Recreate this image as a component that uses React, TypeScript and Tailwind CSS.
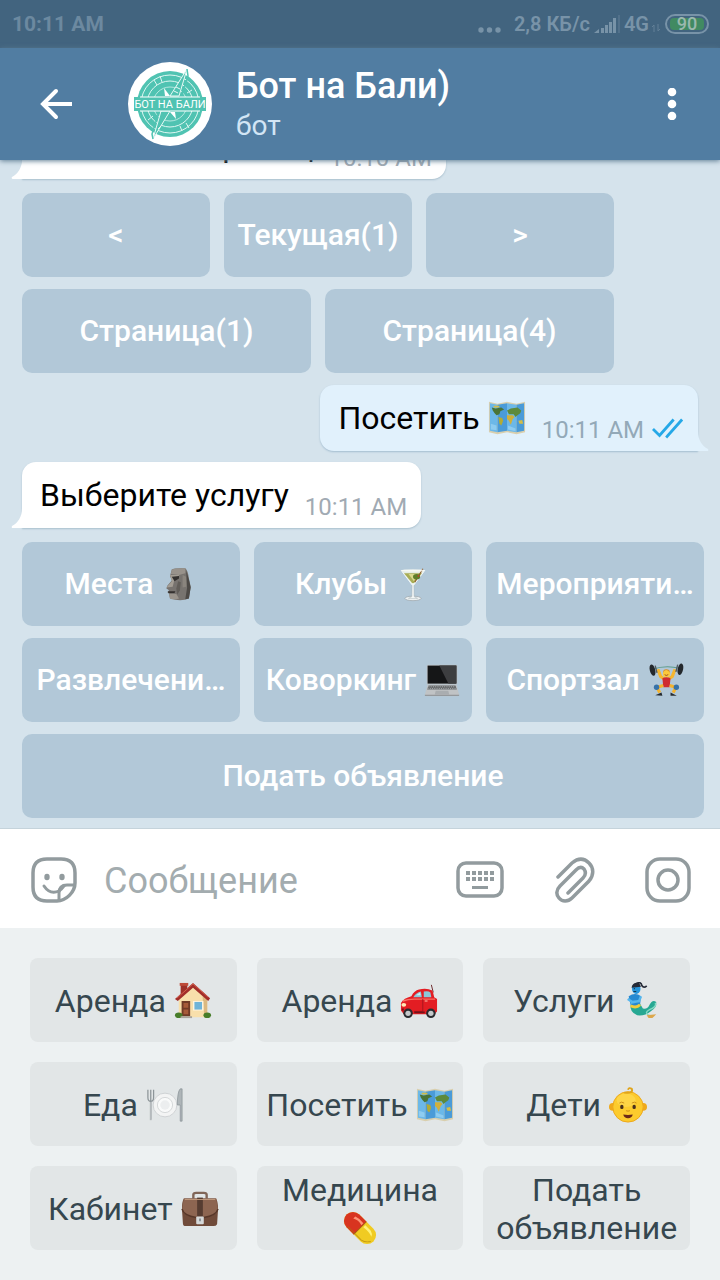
import type { ReactNode } from 'react';

type EmojiName =
  | 'map' | 'moai' | 'cocktail' | 'laptop' | 'lifter' | 'house' | 'car'
  | 'genie' | 'plate' | 'baby' | 'briefcase' | 'pill';

const drawings: Record<EmojiName, ReactNode> = {
  map: (
    <>
      <path d="M1 3 L10 5 L20 3 L30 5 L39 3 V35 L30 37 L20 35 L10 37 L1 35Z" fill="#d9cfae" />
      <path d="M2 4.500 L10 6 V35 L2 33.500Z M20 4.500 L30 6 V35 L20 33.500Z" fill="#6cb8e8" />
      <path d="M10 6 L20 4.500 V33.500 L10 35Z M30 6 L38 4.500 V33.500 L30 35Z" fill="#4a9bd8" />
      <path d="M4 9 L8 10 L14 9 L17 11 L13 13 L12 16 L9 17 L7 15 L5 12Z" fill="#4a7436" />
      <path d="M11 19 L15 20 L16 23 L14 28 L12 26Z" fill="#b2ab35" />
      <path d="M20 12 L24 10 L31 9 L35 12 L34 15 L31 17 L29 19 L27 16 L22 16Z" fill="#5d8a3c" />
      <path d="M20 17 L26 17 L28 19 L26 21 L24 27 L22 23 L20 21Z" fill="#d0b03b" />
      <path d="M32 23 L36 22 L37 26 L33 26Z M6 7h6v2h-6z" fill="#d3bd47" />
      <path d="M3 26 L9 28 V33 L3 32Z M21 28 L29 31 V34 L21 32Z" fill="#a5d9f5" opacity=".6" />
    </>
  ),
  moai: (
    <>
      <path d="M12 4 Q14 2 27 2.500 Q30 5 31 14 L33 23 L31 36 Q22 40 10 36 L9 31 L7 29 L9 27 L6 25 L7 22 L12 16 L10 11Z" fill="#77736f" />
      <path d="M12 4 Q18 2 27 2.500 L27 8 L20 10 L11 9Z" fill="#98928b" />
      <path d="M10 10 L20 10 L19 14 L15 15 L13 23 L6 24 L12 17Z" fill="#a39d94" />
      <path d="M12 12 L20 11 L20 14 L15 17Z M8 28 L16 28 L15 30 L8 30Z" fill="#34312f" />
      <path d="M9 31 L17 31 L20 36 Q14 38 10 36Z" fill="#9a948c" />
      <path d="M24 10 L28 12 L28 23 L24 24Z" fill="#8a857e" />
      <path d="M28 5 L31 15 L33 24 L31 36 L27 37 L29 24Z" fill="#4c4946" />
      <path d="M19 17 L22 18 L21 27 L18 32 L17 25Z" fill="#615d58" />
    </>
  ),
  cocktail: (
    <>
      <ellipse cx="20" cy="36" rx="9" ry="2.500" fill="#edf1f2" stroke="#9aa5aa" strokeWidth=".8" />
      <path d="M19 19 L18.800 34 L15 36 H25 L21.200 34 L21 19Z" fill="#f7fafa" stroke="#aab6bb" strokeWidth=".6" />
      <path d="M7 5 H33 L21 21 H19Z" fill="#e5eee5" stroke="#f6fbfc" strokeWidth="1" />
      <path d="M10 8 H30 L21 19 H19Z" fill="#a8ad56" />
      <path d="M15 9 L25 9 L21 17Z" fill="#d9d98d" />
      <path d="M22 18 L31 3" stroke="#8e5b2b" strokeWidth="1.300" />
      <ellipse cx="24" cy="12" rx="4" ry="3" fill="#5f7e29" />
      <circle cx="26" cy="11" r="1" fill="#c5412f" />
      <ellipse cx="20" cy="5" rx="13" ry="1.500" fill="#f7f9f2" opacity=".8" />
    </>
  ),
  laptop: (
    <>
      <rect x="3" y="3" width="34" height="22" rx="1.500" fill="#bfc5c9" />
      <rect x="4" y="4" width="32" height="20" fill="#151617" />
      <path d="M17 4 H36 V24 H27Z" fill="#3d3e40" />
      <path d="M4 25 H36 L39 36 Q39 38 37 38 H3 Q1 38 1 36Z" fill="#c0c3c5" />
      <path d="M5 26 H35 L36.500 30.500 H3.500Z" fill="#696c6e" />
      <path d="M5 27.500 H35 M4 29.500 H36" stroke="#c5c8ca" strokeWidth=".8" strokeDasharray="1 1.500" />
      <path d="M13 32 H27 L28 36 H12Z" fill="#a9adb0" />
      <path d="M1 37 H39" stroke="#85898c" />
    </>
  ),
  lifter: (
    <>
      <path d="M5 8 Q20 3 35 7" stroke="#5c9b8b" strokeWidth="1.200" fill="none" />
      <path d="M11 8 L14 16 L18 19 M30 8 L27 16 L23 19" stroke="#f6b62f" strokeWidth="3.500" fill="none" />
      <ellipse cx="5" cy="9" rx="3" ry="6.500" transform="rotate(-14 5 9)" fill="#24282c" />
      <ellipse cx="36" cy="8" rx="3" ry="6.500" transform="rotate(12 36 8)" fill="#24282c" />
      <path d="M8 4 L10 12 M33 3 L31 11" stroke="#535b62" strokeWidth="1.500" />
      <circle cx="20.500" cy="13" r="4" fill="#fbc93c" />
      <path d="M16.500 12 Q20 6 24.500 12 L23.500 9 Q20 7 17.500 9Z" fill="#dc8c20" />
      <path d="M16 18 Q20 16 25 18 L24 28 H17Z" fill="#cf2c2f" />
      <path d="M17 26 L10 28 L13 34 M24 26 L31 28 L28 34" stroke="#f4b32e" strokeWidth="3.500" fill="none" />
      <circle cx="9.500" cy="28" r="3" fill="#3672a9" />
      <circle cx="31.500" cy="28" r="3" fill="#3672a9" />
      <path d="M8 37 L15 34 L16 37.500Z M25 34 L32 37.500 H25Z" fill="#282d32" />
      <path d="M18.500 14 Q20 16 22.500 14" stroke="#9a481c" fill="none" />
    </>
  ),
  house: (
    <>
      <rect x="7" y="2" width="7" height="12" fill="#9d3129" />
      <rect x="6" y="1" width="9" height="3" fill="#bd4b39" />
      <path d="M5 17 L20 4 L35 17 V37 H5Z" fill="#f8dfab" />
      <path d="M30 15 L35 17 V37 H32Z" fill="#dcb980" />
      <path d="M1 18 L20 1 L38 17 L36 20 L20 6 L4 20Z" fill="#a22e2a" />
      <path d="M3 17 L20 2 L36 16" stroke="#d4604b" strokeWidth="1" fill="none" />
      <rect x="8" y="20" width="9" height="16" fill="#713b27" />
      <path d="M10 22h5v5h-5z M10 29h5v5h-5z" fill="#a65a39" />
      <rect x="20" y="20" width="11" height="10" fill="#fff5df" />
      <rect x="21.500" y="21" width="8" height="8" fill="#70b4d8" />
      <ellipse cx="5" cy="35" rx="4" ry="3" fill="#477d29" />
      <ellipse cx="35" cy="35" rx="4" ry="3" fill="#477d29" />
      <rect x="7" y="36" width="12" height="2" fill="#a8a49b" />
    </>
  ),
  car: (
    <>
      <path d="M33 3 L35 11" stroke="#6c2528" strokeWidth="1" />
      <path d="M1 22 Q4 17 12 15 Q15 9 20 8 Q28 6 34 9 Q35 11 36 16 L39 18 V31 L36 34 H4 L1 30Z" fill="#e31d23" />
      <path d="M14 16 Q17 11 22 10 L23 16Z M25 10 Q30 9 32 11 L33 16 H25Z" fill="#8bc8d8" />
      <path d="M17 14 L21 11 L22 14Z" fill="#caf0f2" />
      <path d="M3 20 Q8 18 15 18 H37" stroke="#f97164" strokeWidth="1.500" fill="none" />
      <path d="M24 18 V31 H15" stroke="#a4151e" fill="none" />
      <ellipse cx="4" cy="24" rx="2.500" ry="2" fill="#ffe9b6" />
      <circle cx="8.500" cy="33" r="5" fill="#292c30" />
      <circle cx="8.500" cy="33" r="2.800" fill="#c5c9cb" />
      <circle cx="32.500" cy="33" r="5" fill="#292c30" />
      <circle cx="32.500" cy="33" r="2.800" fill="#c5c9cb" />
      <path d="M2 29 H4 M15 32 H26" stroke="#741219" strokeWidth="2" />
      <path d="M26 20 H29" stroke="#ffd1b8" />
    </>
  ),
  genie: (
    <>
      <path d="M13 3 Q20 -2 21 4 Q23 7 26 4" stroke="#252b38" strokeWidth="1.800" fill="none" />
      <ellipse cx="15" cy="7" rx="4.500" ry="5.500" fill="#2796dc" />
      <path d="M10 6 Q11 0 18 1 L20 5Z" fill="#252b38" />
      <path d="M7 15 Q14 10 20 15 L19 24 Q14 28 9 24Z" fill="#2789d1" />
      <path d="M6 18 L11 21 L19 20 M20 15 L18 20 L9 22" stroke="#55b6ed" strokeWidth="2.500" fill="none" />
      <path d="M9 24 Q14 27 19 23 L22 28 Q27 29 29 24 Q32 18 36 21 Q37 27 30 31 Q24 36 16 35 Q8 32 9 24Z" fill="#27a893" />
      <path d="M9 25 Q15 28 19 24" stroke="#f1cc3c" strokeWidth="3" fill="none" />
      <path d="M35 22 Q37 26 29 29 Q23 32 28 35 L32 36" stroke="#86d9c3" strokeWidth="1.500" fill="none" />
      <path d="M26 35 L36 34 L32 38 H28Z" fill="#dca74b" />
      <circle cx="13" cy="7" r=".7" fill="#12334d" />
      <path d="M12 10 H15" stroke="#12334d" />
    </>
  ),
  plate: (
    <>
      <circle cx="20" cy="20" r="12.500" fill="#f3f4f4" stroke="#cdd1d3" />
      <circle cx="20" cy="20" r="8" fill="#f9fafa" stroke="#d4d7d8" />
      <circle cx="20" cy="20" r="5" fill="#eceeef" />
      <path d="M2 4v8q0 4 3 4 3 0 3-4V4 M5 4v31" stroke="#8d9599" strokeWidth="1.300" fill="none" />
      <path d="M5 17v19" stroke="#b5babd" strokeWidth="2" />
      <path d="M36 3 Q33 6 33 20 H36 V37 H38 V3Z" fill="#aeb5b8" stroke="#858e93" strokeWidth=".7" />
    </>
  ),
  baby: (
    <>
      <circle cx="4" cy="22" r="4" fill="#efa91b" />
      <circle cx="36" cy="22" r="4" fill="#efa91b" />
      <circle cx="20" cy="22" r="16" fill="#fccb2d" stroke="#eca71b" />
      <ellipse cx="18" cy="15" rx="10" ry="7" fill="#ffdc56" opacity=".6" />
      <path d="M16 7 Q26 8 24 3 Q21 1 20 4" stroke="#e0a51c" strokeWidth="2" fill="none" />
      <ellipse cx="13.500" cy="22" rx="1.800" ry="2.300" fill="#49301c" />
      <ellipse cx="26.500" cy="22" rx="1.800" ry="2.300" fill="#49301c" />
      <path d="M11 18 Q13 16 16 18 M24 18 Q27 16 29 18 M18 26 Q20 27 22 26" stroke="#c98d17" fill="none" />
      <path d="M15 30 Q20 31 25 30 Q24 34 20 34 Q16 34 15 30" fill="#6b2a18" />
    </>
  ),
  briefcase: (
    <>
      <path d="M13 9 V5 Q13 3 16 3 H24 Q27 3 27 5 V9" stroke="#806557" strokeWidth="2.500" fill="none" />
      <path d="M3 9 H37 Q39 13 39 20 L38 36 Q37 38 34 38 H5 Q2 38 2 35 L1 20 Q1 12 3 9Z" fill="#704b3a" />
      <path d="M3 9 H37 L39 21 Q36 28 24 29 H16 Q4 28 1 21Z" fill="#8d6551" />
      <path d="M1 20 Q3 27 16 29 H24 Q37 27 39 20" fill="none" stroke="#573729" strokeWidth="1.500" />
      <rect x="17" y="8" width="6" height="20" fill="#563c31" />
      <rect x="16" y="28" width="8" height="8" rx="1" fill="#d6d9da" />
      <path d="M19 30h2v3h-2z" fill="#8b9194" />
      <path d="M4 10 H36" stroke="#c0997c" />
    </>
  ),
  pill: (
    <g transform="rotate(45 20 20)">
      <rect x="0" y="10.500" width="40" height="19" rx="9.500" fill="#f0cb22" />
      <path d="M9.500 10.500 H20 V29.500 H9.500 A9.500 9.500 0 0 1 9.500 10.500Z" fill="#d83420" />
      <path d="M20 10.500 V29.500" stroke="#a85b14" />
      <path d="M8 15 Q13 13 19 14 L19 17 Q13 15 8 18Z" fill="#ff9375" />
      <path d="M22 14 H30 Q34 15 35 18 Q30 16 22 17Z" fill="#fff278" />
      <path d="M10 28 H30 Q35 27 38 22" stroke="#a97a0c" fill="none" opacity=".6" />
    </g>
  ),
};

function Emoji({ name, className = 'size-9' }: { name: EmojiName; className?: string }) {
  return (
    <svg viewBox="0 0 40 40" className={`shrink-0 ${className}`} aria-hidden="true">
      {drawings[name]}
    </svg>
  );
}

function InlineKey({ label, emoji }: { label: string; emoji?: EmojiName }) {
  return (
    <button
      type="button"
      className="flex h-[84px] min-w-0 flex-1 items-center justify-center gap-2 rounded-[10px] bg-[#b2c8d8] text-[30px] leading-9 font-medium whitespace-nowrap text-white"
    >
      {label}
      {emoji && <Emoji name={emoji} />}
    </button>
  );
}

function ReplyKey({ label, emoji, wrap }: { label: string; emoji?: EmojiName; wrap?: boolean }) {
  return (
    <button
      type="button"
      className={`flex h-[84px] min-w-0 items-center justify-center rounded-lg bg-[#e2e6e7] pt-0.5 text-[32px] leading-[38px] text-[#36474f] ${
        wrap ? 'flex-col' : 'gap-2 whitespace-nowrap'
      }`}
    >
      <span>{label}</span>
      {emoji && <Emoji name={emoji} className="size-[38px]" />}
    </button>
  );
}

function Incoming({ text, time }: { text: string; time: string }) {
  return (
    <div className="relative flex h-[66px] w-fit shrink-0 items-center rounded-[14px] rounded-bl-none bg-white pr-[14px] pl-[18px] shadow-[0_1px_2px_#a9bfcd]">
      <svg viewBox="0 0 12 20" className="absolute bottom-0 -left-[11px] h-5 w-3" aria-hidden="true">
        <path d="M12 0 H11 C11 9 7 15 1 18 Q0 20 2 20 H12Z" fill="#fff" />
      </svg>
      <span className="text-[32px] leading-10 text-black">{text}</span>
      <time className="mt-6 ml-4 text-2xl leading-7 text-[#a1aab3]">{time}</time>
    </div>
  );
}

function Avatar() {
  return (
    <svg viewBox="0 0 84 84" className="ml-14 size-[84px] shrink-0" role="img" aria-label="Бот на Бали">
      <circle cx="42" cy="42" r="42" fill="#fff" />
      <circle cx="42" cy="42" r="33" fill="#50c3b2" />
      <g fill="none" stroke="#dff7f2" strokeWidth="1">
        <circle cx="42" cy="42" r="29" />
        <circle cx="42" cy="42" r="23" />
        <circle cx="42" cy="42" r="17" strokeWidth=".7" />
        <path d="M26 18 L29 23 M32 14 L34 20 M52 64 L54 69 M58 61 L61 66 M20 58 L25 54 M64 28 L59 31" />
      </g>
      <path d="M59 7 L42 34 L51 34Z M25 77 L42 49 L33 49Z" fill="#50c3b2" stroke="#e8faf6" strokeWidth="1" />
      <path d="M59 7 L60 14 L54 33 M25 77 L24 72 L31 50" fill="none" stroke="#50c3b2" strokeWidth="1.500" />
      <path d="M48 25 L52 27 M46 29 L50 31 M30 67 L33 64" stroke="#e8faf6" />
      <path d="M36 26 L42 34 H37Z M48 57 L42 50 H47Z" fill="#fff" />
      <rect x="6" y="35" width="72" height="14" fill="#50c3b2" />
      <path d="M12 35 H72 M12 49 H72" stroke="#fff" />
      <text x="42" y="46" textAnchor="middle" fontSize="11" fill="#fff">БОТ НА БАЛИ</text>
    </svg>
  );
}

function StatusBar() {
  return (
    <div className="flex h-12 shrink-0 items-center bg-[#42647f] pr-[11px] pl-3 text-[21px] leading-6 font-bold text-[#7893a8]">
      <span className="text-[#6c89a0]">10:11 AM</span>
      <svg viewBox="0 0 24 24" className="ml-auto size-6" fill="#7893a8" aria-hidden="true">
        <circle cx="3" cy="18" r="2.700" />
        <circle cx="11.500" cy="18" r="2.700" />
        <circle cx="20" cy="18" r="2.700" />
      </svg>
      <span className="ml-3 text-xl font-semibold">2,8 КБ/с</span>
      <svg viewBox="0 0 26 20" className="ml-1 h-5 w-[26px]" fill="#7893a8" aria-hidden="true">
        <path d="M0 19 L5 15 V19Z M7 14h3v5h-3z M11 11h3v8h-3z M15 8h3v11h-3z M19 4h3v15h-3z" />
        <path d="M24 1h2v18h-2z" opacity=".3" />
      </svg>
      <span className="ml-1 text-xl font-semibold">4G</span>
      <svg viewBox="0 0 10 10" className="mt-2 ml-0.5 size-2.5" stroke="#7893a8" fill="none" opacity=".6" aria-hidden="true">
        <path d="M3 9 V2 L1 4 M7 1 V8 L9 6" />
      </svg>
      <div className="ml-1 flex h-5 w-11 items-center justify-center rounded-full border-2 border-[#7893a8] p-[3px]">
        <span className="flex h-3 w-full items-center justify-center rounded-sm bg-[#418a62] text-lg leading-3 font-medium text-[#9ab8ae]">
          90
        </span>
      </div>
    </div>
  );
}

export default function App() {
  return (
    <div className="flex h-screen flex-col overflow-hidden bg-[#edf1f2] font-[Roboto,sans-serif]">
      <StatusBar />
      <header className="z-10 flex h-28 shrink-0 items-center bg-[#517da2] pr-8 pl-10 text-white shadow-[0_1px_5px_#5f7d93]">
        <button type="button" aria-label="Назад" className="size-8">
          <svg viewBox="0 0 32 32" fill="none" stroke="currentColor" strokeWidth="4" aria-hidden="true">
            <path d="M32 16 H3" />
            <path d="M16 3 L3 16 L16 29" strokeLinecap="round" />
          </svg>
        </button>
        <Avatar />
        <div className="mt-0.5 ml-6">
          <h1 className="text-4xl leading-[42px] font-medium">Бот на Бали)</h1>
          <p className="text-[28px] leading-[38px] text-[#d2e5f5]">бот</p>
        </div>
        <button type="button" aria-label="Меню" className="ml-auto h-8">
          <svg viewBox="0 0 32 32" className="size-8" fill="currentColor" aria-hidden="true">
            <circle cx="16" cy="4" r="4.300" />
            <circle cx="16" cy="16" r="4.300" />
            <circle cx="16" cy="28" r="4.300" />
          </svg>
        </button>
      </header>

      <main className="flex min-h-0 flex-1 flex-col justify-end overflow-hidden bg-[#d5e3ec] pr-4 pb-[10px] pl-[22px]">
        <Incoming text="Осталось страниц" time="10:10 AM" />
        <div className="mt-[14px] flex max-w-[592px] shrink-0 flex-col gap-3">
          <div className="flex gap-[14px]">
            <InlineKey label="<" />
            <InlineKey label="Текущая(1)" />
            <InlineKey label=">" />
          </div>
          <div className="flex gap-[14px]">
            <InlineKey label="Страница(1)" />
            <InlineKey label="Страница(4)" />
          </div>
        </div>

        <div className="relative mt-3 mr-[6px] flex h-[66px] w-fit shrink-0 items-center self-end rounded-[14px] rounded-br-none bg-[#e1f1fc] pr-[14px] pl-[18px] shadow-[0_1px_2px_#a3bdd0]">
          <span className="text-[32px] leading-10 text-black">Посетить</span>
          <Emoji name="map" className="ml-2 size-[38px]" />
          <time className="mt-6 ml-4 text-2xl leading-7 text-[#93a9b8]">10:11 AM</time>
          <svg viewBox="0 0 34 22" className="mt-5 ml-2 h-[22px] w-8" fill="none" stroke="#25a8e7" strokeWidth="3" aria-hidden="true">
            <path d="M1 12 L8 19 L23 2 M15 19 L16 20 L32 2" />
          </svg>
          <svg viewBox="0 0 12 20" className="absolute -right-[11px] bottom-0 h-5 w-3" aria-hidden="true">
            <path d="M0 0 H1 C1 9 5 15 11 18 Q12 20 10 20 H0Z" fill="#e1f1fc" />
          </svg>
        </div>

        <div className="mt-[11px] shrink-0">
          <Incoming text="Выберите услугу" time="10:11 AM" />
        </div>
        <div className="mt-[14px] flex shrink-0 flex-col gap-3">
          <div className="flex gap-[14px]">
            <InlineKey label="Места" emoji="moai" />
            <InlineKey label="Клубы" emoji="cocktail" />
            <InlineKey label="Мероприяти…" />
          </div>
          <div className="flex gap-[14px]">
            <InlineKey label="Развлечени…" />
            <InlineKey label="Коворкинг" emoji="laptop" />
            <InlineKey label="Спортзал" emoji="lifter" />
          </div>
          <div className="flex">
            <InlineKey label="Подать объявление" />
          </div>
        </div>
      </main>

      <form className="flex h-[100px] shrink-0 items-center border-t border-[#c5d3db] bg-white pt-1 pr-7 pl-[30px] text-[#929b9e]">
        <button type="button" aria-label="Стикеры" className="size-12 shrink-0">
          <svg viewBox="0 0 48 48" fill="none" stroke="currentColor" strokeWidth="3.500" aria-hidden="true">
            <path d="M27 44 H17 Q3 44 3 30 V16 Q3 2 17 2 H31 Q45 2 45 16 V26 C45 35 36 44 27 44Z" />
            <path d="M29 44 V36 Q29 28 37 28 H44" strokeWidth="3" />
            <path d="M14 29 Q20 38 29 34 Q32 32 34 29" strokeWidth="3" strokeLinecap="round" />
            <g fill="currentColor" stroke="none">
              <ellipse cx="17" cy="20" rx="2.700" ry="3.300" />
              <ellipse cx="32" cy="20" rx="2.700" ry="3.300" />
            </g>
          </svg>
        </button>
        <input
          type="text"
          aria-label="Сообщение"
          placeholder="Сообщение"
          className="ml-[26px] h-14 min-w-0 flex-1 bg-transparent text-4xl outline-none placeholder:text-[#a3acaf]"
        />
        <div className="flex shrink-0 items-center gap-[46px]">
          <button type="button" aria-label="Клавиатура" className="size-12">
            <svg viewBox="0 0 48 48" fill="none" stroke="currentColor" strokeWidth="3.500" aria-hidden="true">
              <rect x="2" y="6" width="44" height="33" rx="8" />
              <path d="M10 16 H38 M10 22 H38" strokeWidth="4" strokeDasharray="4 2" />
              <path d="M16 30.500 H32" strokeWidth="3" />
            </svg>
          </button>
          <button type="button" aria-label="Прикрепить" className="size-12">
            <svg viewBox="0 0 48 48" fill="none" stroke="currentColor" strokeWidth="3.500" strokeLinecap="round" aria-hidden="true">
              <path d="M8 20 L22 6 C28 1 34 1 39 6 C44 11 44 18 39 24 L22 41 C18 45 12 45 9 41 C6 38 6 33 10 29 L26 13 C29 10 32 10 34 12 C36 15 36 18 33 21 L18 36" />
            </svg>
          </button>
          <button type="button" aria-label="Видеосообщение" className="size-12">
            <svg viewBox="0 0 48 48" fill="none" stroke="currentColor" strokeWidth="3.500" aria-hidden="true">
              <rect x="3" y="2" width="42" height="42" rx="13" />
              <circle cx="24" cy="23" r="10" />
            </svg>
          </button>
        </div>
      </form>

      <section aria-label="Клавиатура бота" className="grid shrink-0 grid-cols-3 gap-5 bg-[#edf1f2] p-[30px]">
        <ReplyKey label="Аренда" emoji="house" />
        <ReplyKey label="Аренда" emoji="car" />
        <ReplyKey label="Услуги" emoji="genie" />
        <ReplyKey label="Еда" emoji="plate" />
        <ReplyKey label="Посетить" emoji="map" />
        <ReplyKey label="Дети" emoji="baby" />
        <ReplyKey label="Кабинет" emoji="briefcase" />
        <ReplyKey label="Медицина" emoji="pill" wrap />
        <ReplyKey label="Подать объявление" wrap />
      </section>
    </div>
  );
}
